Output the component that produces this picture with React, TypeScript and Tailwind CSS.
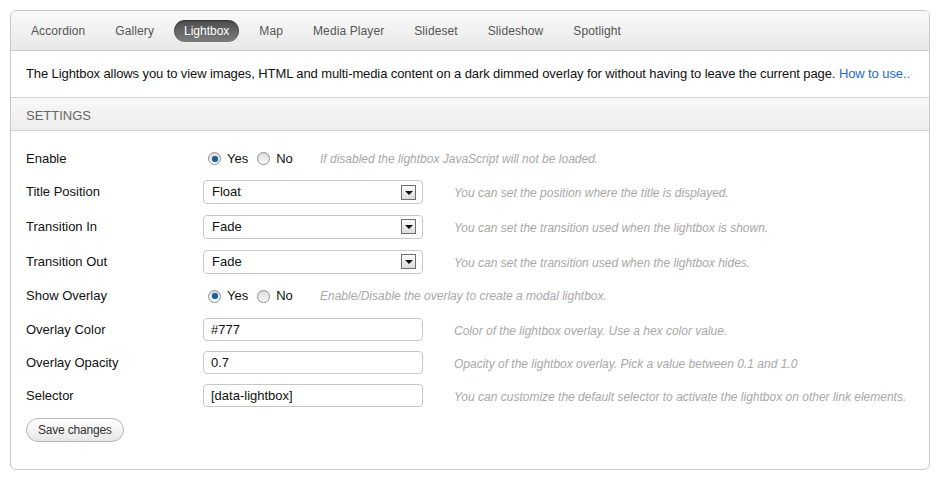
const tabs = ["Accordion", "Gallery", "Lightbox", "Map", "Media Player", "Slideset", "Slideshow", "Spotlight"]

const Radio = ({ checked, label }: { checked?: boolean; label: string }) => {
    return (
        <label className="flex items-center">
            <span className="flex items-center justify-center w-[13px] h-[13px] rounded-full border border-[#8f8f8f] bg-gradient-to-b from-[#dcdcdc] to-[#fafafa]">
                {checked && <span className="w-[6px] h-[6px] rounded-full bg-[#1c5f94] shadow-[0_0_1px_#4aa0e0]" />}
            </span>
            <span className="ml-[6px] text-[13px] text-[#111]">{label}</span>
        </label>
    )
}

const Select = ({ value }: { value: string }) => {
    return (
        <div className="flex items-center justify-between w-[220px] h-[24px] border border-[#c8c8c8] rounded-[4px] bg-white pl-[8px] pr-[6px]">
            <span className="text-[13px] text-[#111]">{value}</span>
            <span className="flex items-center justify-center w-[15px] h-[15px] border border-[#6f6f6f] bg-gradient-to-b from-[#fbfbfb] to-[#dcdcdc]">
                <span className="w-0 h-0 border-l-[4px] border-r-[4px] border-t-[4px] border-l-transparent border-r-transparent border-t-[#111] mt-[1px]" />
            </span>
        </div>
    )
}

const TextInput = ({ value }: { value: string }) => {
    return (
        <div className="flex items-center w-[220px] h-[23px] border border-[#c8c8c8] rounded-[4px] bg-white px-[7px]">
            <span className="text-[13px] text-[#111]">{value}</span>
        </div>
    )
}

const Hint = ({ children }: { children: string }) => (
    <span className="italic text-[12px] text-[#a8a8a8]">{children}</span>
)

const Row = ({ label, height, children }: { label: string; height: string; children: React.ReactNode }) => {
    return (
        <div className={`flex items-center ${height}`}>
            <div className="w-[177px] text-[13px] text-[#111]">{label}</div>
            {children}
        </div>
    )
}

const App = () => {
    return (
        <div className="bg-white w-[940px] h-[480px] pt-[10px] pl-[10px]" style={{ fontFamily: '"Liberation Sans", Arial, sans-serif' }}>
            <div className="w-[920px] h-[460px] border border-[#c9c9c9] rounded-[6px] overflow-hidden flex flex-col">

                <div className="flex items-center h-[40px] px-[10px] gap-[10px] border-b border-[#cdcdcd] bg-gradient-to-b from-[#fafafa] to-[#e8e8e8]">
                    {tabs.map((tab) =>
                        tab === "Lightbox" ? (
                            <span key={tab} className="px-[10px] h-[22px] flex items-center rounded-full text-[12px] text-white bg-gradient-to-b from-[#4d4d4d] to-[#7d7d7d] shadow-[inset_0_1px_2px_rgba(0,0,0,0.4)]">
                                {tab}
                            </span>
                        ) : (
                            <span key={tab} className="px-[10px] text-[12px] text-[#555] tracking-[0.1px]">
                                {tab}
                            </span>
                        )
                    )}
                </div>

                <div className="h-[47px] flex items-center px-[15px] border-b border-[#d3d3d3] text-[13px] text-[#111]">
                    <p className="whitespace-nowrap tracking-[-0.1px]">
                        The Lightbox allows you to view images, HTML and multi-media content on a dark dimmed overlay for without having to leave the current page.{" "}
                        <a className="text-[#2a6ac6]">How to use..</a>
                    </p>
                </div>

                <div className="h-[33px] flex items-center px-[15px] pt-[3px] border-b border-[#d3d3d3] bg-gradient-to-b from-[#f8f8f8] to-[#ededed] text-[13px] text-[#666]">
                    SETTINGS
                </div>

                <div className="flex flex-col px-[15px] pt-[11px]">
                    <Row label="Enable" height="h-[33px]">
                        <div className="flex items-center gap-[9px] pl-[5px] w-[117px]">
                            <Radio checked label="Yes" />
                            <Radio label="No" />
                        </div>
                        <Hint>If disabled the lightbox JavaScript will not be loaded.</Hint>
                    </Row>
                    <Row label="Title Position" height="h-[34px]">
                        <Select value="Float" />
                        <span className="ml-[31px]"><Hint>You can set the position where the title is displayed.</Hint></span>
                    </Row>
                    <Row label="Transition In" height="h-[35px]">
                        <Select value="Fade" />
                        <span className="ml-[31px]"><Hint>You can set the transition used when the lightbox is shown.</Hint></span>
                    </Row>
                    <Row label="Transition Out" height="h-[35px]">
                        <Select value="Fade" />
                        <span className="ml-[31px]"><Hint>You can set the transition used when the lightbox hides.</Hint></span>
                    </Row>
                    <Row label="Show Overlay" height="h-[34px]">
                        <div className="flex items-center gap-[9px] pl-[5px] w-[117px]">
                            <Radio checked label="Yes" />
                            <Radio label="No" />
                        </div>
                        <Hint>Enable/Disable the overlay to create a modal lightbox.</Hint>
                    </Row>
                    <Row label="Overlay Color" height="h-[33px]">
                        <TextInput value="#777" />
                        <span className="ml-[31px]"><Hint>Color of the lightbox overlay. Use a hex color value.</Hint></span>
                    </Row>
                    <Row label="Overlay Opacity" height="h-[33px]">
                        <TextInput value="0.7" />
                        <span className="ml-[31px]"><Hint>Opacity of the lightbox overlay. Pick a value between 0.1 and 1.0</Hint></span>
                    </Row>
                    <Row label="Selector" height="h-[33px]">
                        <TextInput value="[data-lightbox]" />
                        <span className="ml-[31px]"><Hint>You can customize the default selector to activate the lightbox on other link elements.</Hint></span>
                    </Row>

                    <div className="mt-[5px]">
                        <button className="h-[24px] px-[11px] rounded-full border border-[#b5b5b5] bg-gradient-to-b from-white to-[#e6e6e6] text-[12px] text-[#333] tracking-[-0.2px]">
                            Save changes
                        </button>
                    </div>
                </div>

            </div>
        </div>
    )
}

export default App
